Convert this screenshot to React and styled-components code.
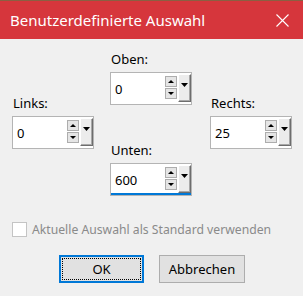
import React from "react";
import styled, { createGlobalStyle } from "styled-components";

const GlobalStyle = createGlobalStyle`
  html, body {
    margin: 0;
    padding: 0;
    background: #f0f0f0;
    font-family: "Noto Sans", "Open Sans", sans-serif;
  }
`;

const Window = styled.div`
  width: 303px;
  height: 296px;
  display: flex;
  flex-direction: column;
  background: #f0f0f0;
  overflow: hidden;
`;

const TopStrip = styled.div`
  height: 1px;
  background: #8a5f42;
`;

const TitleBar = styled.div`
  height: 38px;
  background: #d6363c;
  display: flex;
  align-items: center;
  justify-content: space-between;
  padding-left: 10px;
`;

const Title = styled.span`
  color: #fff;
  font-size: 15px;
`;

const CloseButton = styled.div`
  width: 46px;
  height: 38px;
  display: flex;
  align-items: center;
  justify-content: center;
  margin-right: -2px;
`;

const FieldGrid = styled.div`
  display: grid;
  grid-template-columns: 98px 100px 82px;
  grid-template-rows: 44px 10px 37px 7px 47px;
  padding: 12px 0 0 12px;
`;

const Field = styled.div`
  grid-column: ${({ col }) => col};
  grid-row: ${({ rows }) => rows};
  display: flex;
  flex-direction: column;
  gap: 4px;
`;

const Label = styled.label`
  font-size: 13px;
  line-height: 17px;
  color: #000;
  padding-left: 1px;
`;

const SpinBox = styled.div`
  width: 82px;
  height: 33px;
  box-sizing: border-box;
  border: 1px solid #b4b4b4;
  background: #fff;
  display: flex;
  align-items: flex-start;
  box-shadow: ${({ focused }) => (focused ? "inset 0 -2px 0 #0078d7" : "none")};
`;

const Value = styled.div`
  width: 54px;
  height: 31px;
  padding-left: 4px;
  box-sizing: border-box;
  display: flex;
  align-items: center;
  font-size: 13px;
  color: #000;
`;

const SpinColumn = styled.div`
  display: flex;
  flex-direction: column;
  gap: 1px;
  margin-top: 3px;
`;

const SpinButton = styled.div`
  width: 12px;
  height: 11px;
  box-sizing: border-box;
  border: 1px solid #adadad;
  background: #e5e5e5;
  display: flex;
  align-items: center;
  justify-content: center;
`;

const DropButton = styled.div`
  width: 13px;
  height: 28px;
  margin: 1px 0 0 1px;
  box-sizing: border-box;
  background: #ececec;
  border-left: 1px solid #fff;
  border-top: 1px solid #fff;
  border-right: 1px solid #6d6d6d;
  border-bottom: 1px solid #6d6d6d;
  box-shadow: inset -1px -1px 0 #a8a8a8;
  display: flex;
  justify-content: center;
  padding-top: 8px;
`;

const CheckRow = styled.div`
  display: flex;
  align-items: center;
  gap: 5px;
  margin-top: 25px;
  padding-left: 12px;
`;

const CheckBox = styled.div`
  width: 15px;
  height: 15px;
  box-sizing: border-box;
  border: 1px solid #c4c4c4;
  background: #fff;
`;

const CheckText = styled.span`
  font-size: 12.2px;
  color: #8a8a8a;
`;

const ButtonRow = styled.div`
  display: flex;
  justify-content: center;
  gap: 15px;
  margin-top: 17px;
  padding-left: 1px;
`;

const Button = styled.div`
  width: ${({ w }) => w}px;
  height: 28px;
  box-sizing: border-box;
  background: #e1e1e1;
  border: ${({ primary }) => (primary ? "2px solid #0078d7" : "1px solid #adadad")};
  outline: ${({ primary }) => (primary ? "1px dotted #000" : "none")};
  outline-offset: -4px;
  display: flex;
  align-items: center;
  justify-content: center;
  font-size: 13px;
  color: #000;
`;

const Tri = ({ dir = "down", w = 7, h = 4 }) => (
  <svg width={w} height={h} viewBox={`0 0 ${w} ${h}`}>
    {dir === "down" ? (
      <polygon points={`0,0 ${w},0 ${w / 2},${h}`} fill="#000" />
    ) : (
      <polygon points={`0,${h} ${w},${h} ${w / 2},0`} fill="#000" />
    )}
  </svg>
);

const Spinner = ({ value, focused }) => (
  <SpinBox focused={focused}>
    <Value>{value}</Value>
    <SpinColumn>
      <SpinButton>
        <Tri dir="up" w={6} h={3} />
      </SpinButton>
      <SpinButton>
        <Tri dir="down" w={6} h={3} />
      </SpinButton>
    </SpinColumn>
    <DropButton>
      <Tri dir="down" w={7} h={4} />
    </DropButton>
  </SpinBox>
);

const fields = [
  { label: "Oben:", value: "0", col: 2, rows: "1 / 3" },
  { label: "Links:", value: "0", col: 1, rows: "2 / 5" },
  { label: "Rechts:", value: "25", col: 3, rows: "2 / 5" },
  { label: "Unten:", value: "600", col: 2, rows: "4 / 6", focused: true },
];

const App = () => {
  return (
    <>
      <GlobalStyle />
      <Window>
        <TopStrip />
        <TitleBar>
          <Title>Benutzerdefinierte Auswahl</Title>
          <CloseButton>
            <svg width="13" height="13" viewBox="0 0 13 13">
              <path d="M0.5 0.5 L12.5 12.5 M12.5 0.5 L0.5 12.5" stroke="#fff" strokeWidth="1.1" />
            </svg>
          </CloseButton>
        </TitleBar>

        <FieldGrid>
          {fields.map((f) => (
            <Field key={f.label} col={f.col} rows={f.rows}>
              <Label>{f.label}</Label>
              <Spinner value={f.value} focused={f.focused} />
            </Field>
          ))}
        </FieldGrid>

        <CheckRow>
          <CheckBox />
          <CheckText>Aktuelle Auswahl als Standard verwenden</CheckText>
        </CheckRow>

        <ButtonRow>
          <Button primary w={85}>OK</Button>
          <Button w={86}>Abbrechen</Button>
        </ButtonRow>
      </Window>
    </>
  );
};

export default App;
